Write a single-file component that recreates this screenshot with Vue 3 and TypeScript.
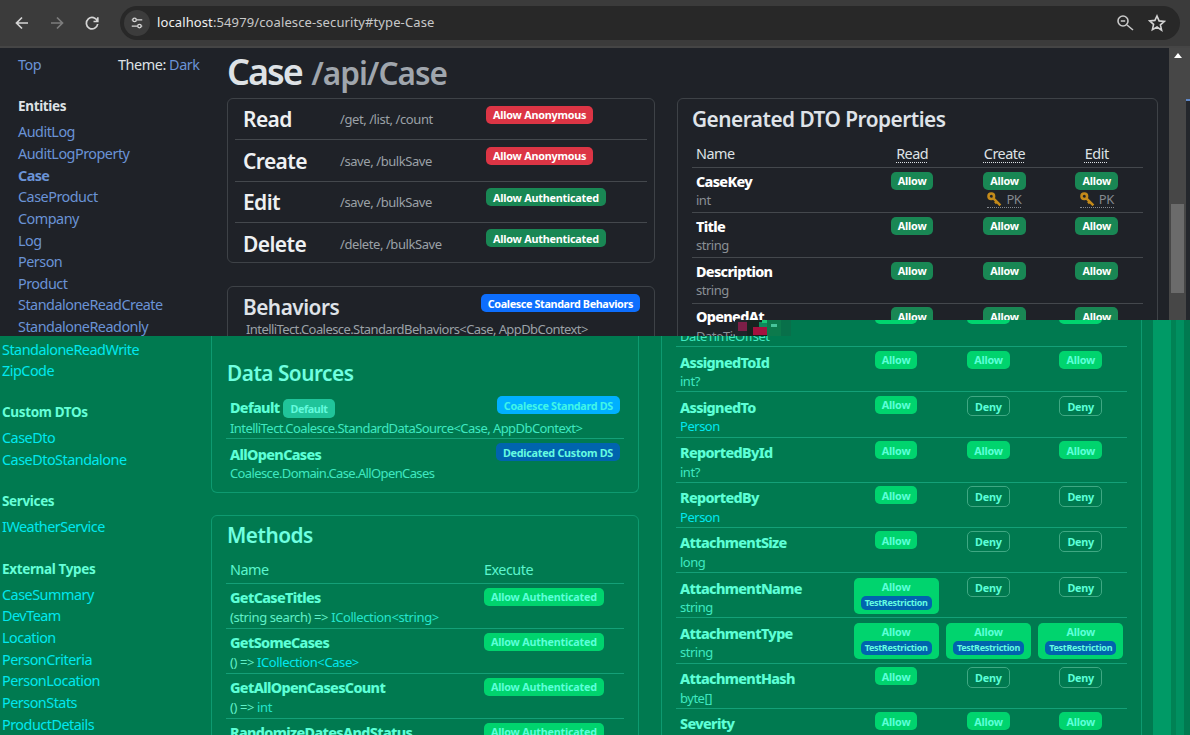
<script setup lang="ts">
type Access = 'allow' | 'deny' | 'restrict'
interface DtoRow { name: string; type: string; link?: boolean; access: Access[]; pk?: boolean }

const topEntities = ['AuditLog', 'AuditLogProperty', 'Case', 'CaseProduct', 'Company', 'Log', 'Person', 'Product', 'StandaloneReadCreate', 'StandaloneReadonly']
const groups = [
  { title: 'Custom DTOs', links: ['CaseDto', 'CaseDtoStandalone'] },
  { title: 'Services', links: ['IWeatherService'] },
  { title: 'External Types', links: ['CaseSummary', 'DevTeam', 'Location', 'PersonCriteria', 'PersonLocation', 'PersonStats', 'ProductDetails'] },
]
const perms = [
  { name: 'Read', route: '/get, /list, /count', label: 'Allow Anonymous', kind: 'danger' },
  { name: 'Create', route: '/save, /bulkSave', label: 'Allow Anonymous', kind: 'danger' },
  { name: 'Edit', route: '/save, /bulkSave', label: 'Allow Authenticated', kind: 'allow' },
  { name: 'Delete', route: '/delete, /bulkSave', label: 'Allow Authenticated', kind: 'allow' },
]
const allAllow: Access[] = ['allow', 'allow', 'allow']
const readOnly: Access[] = ['allow', 'deny', 'deny']
const darkRows: DtoRow[] = [
  { name: 'CaseKey', type: 'int', access: allAllow, pk: true },
  { name: 'Title', type: 'string', access: allAllow },
  { name: 'Description', type: 'string', access: allAllow },
  { name: 'OpenedAt', type: 'DateTimeOffset', access: allAllow },
]
const greenRows: DtoRow[] = [
  { name: '\u00a0', type: 'DateTimeOffset', access: allAllow },
  { name: 'AssignedToId', type: 'int?', access: allAllow },
  { name: 'AssignedTo', type: 'Person', link: true, access: readOnly },
  { name: 'ReportedById', type: 'int?', access: allAllow },
  { name: 'ReportedBy', type: 'Person', link: true, access: readOnly },
  { name: 'AttachmentSize', type: 'long', access: readOnly },
  { name: 'AttachmentName', type: 'string', access: ['restrict', 'deny', 'deny'] },
  { name: 'AttachmentType', type: 'string', access: ['restrict', 'restrict', 'restrict'] },
  { name: 'AttachmentHash', type: 'byte[]', access: readOnly },
  { name: 'Severity', type: 'string', access: allAllow },
]
const methods = [
  { name: 'GetCaseTitles', pre: '(string search) => ', ret: 'ICollection<string>', link: false },
  { name: 'GetSomeCases', pre: '() => ', ret: 'ICollection<Case>', link: true },
  { name: 'GetAllOpenCasesCount', pre: '() => ', ret: 'int', link: false },
  { name: 'RandomizeDatesAndStatus', pre: '() => ', ret: 'void', link: false },
]
const heads = ['Read', 'Create', 'Edit']
</script>

<template>
  <div class="page">
    <header class="chrome">
      <div class="navs">
        <svg class="nav" viewBox="0 0 16 16"><path d="M14 8H3M8 2.500 2.500 8 8 13.500" /></svg>
        <svg class="nav off" viewBox="0 0 16 16"><path d="M2 8h11M8 2.500 13.500 8 8 13.500" /></svg>
        <svg class="nav" viewBox="0 0 16 16"><path d="M13.400 6.200A5.700 5.700 0 1 0 13.700 9M13.800 2.200v4.300H9.500" /></svg>
      </div>
      <div class="omni">
        <span class="tune">
          <svg viewBox="0 0 16 16"><path d="M2 4.500h1M7.500 4.500H14M2 11.500h6.500M13 11.500h1" /><circle cx="5.200" cy="4.500" r="2" /><circle cx="10.800" cy="11.500" r="2" /></svg>
        </span>
        <span class="url"><b>localhost</b>:54979/coalesce-security#type-Case</span>
        <svg class="omni-icon" viewBox="0 0 18 18"><circle cx="7" cy="7" r="5" /><path d="M4.800 7h4.400M11 11l6 5" /></svg>
        <svg class="omni-icon star" viewBox="0 0 18 18"><path d="m9 2 2.100 4.900 5.300.5-4 3.500 1.200 5.200L9 13l-4.600 2.600 1.200-5.200-4-3.500 5.300-.5z" /></svg>
      </div>
    </header>

    <section class="band dark">
      <nav class="side">
        <div class="side-top"><a class="link">Top</a><span class="theme">Theme: <a class="link">Dark</a></span></div>
        <h6 class="group">Entities</h6>
        <a v-for="e in topEntities" :key="e" class="link row-link" :class="{ cur: e === 'Case' }">{{ e }}</a>
      </nav>
      <main class="main">
        <h1 class="title">Case <small>/api/Case</small></h1>
        <div class="cols">
          <div class="col-left">
            <div class="card perms">
              <div v-for="p in perms" :key="p.name" class="perm">
                <span class="perm-name">{{ p.name }}</span>
                <span class="perm-route">{{ p.route }}</span>
                <span class="perm-cell"><span class="badge" :class="p.kind">{{ p.label }}</span></span>
              </div>
            </div>
            <div class="card behaviors">
              <div class="head-line">
                <h2 class="h">Behaviors</h2>
                <span class="badge primary">Coalesce Standard Behaviors</span>
              </div>
              <div class="sub behave-sub">IntelliTect.Coalesce.StandardBehaviors&lt;Case, AppDbContext&gt;</div>
            </div>
          </div>
          <div class="card col-right">
            <h2 class="h">Generated DTO Properties</h2>
            <div class="dto-head">
              <span>Name</span>
              <span v-for="h in heads" :key="h" class="dto-h"><u>{{ h }}</u></span>
            </div>
            <div v-for="r in darkRows" :key="r.name" class="dto">
              <div class="dto-name"><strong>{{ r.name }}</strong><span class="sub">{{ r.type }}</span></div>
              <div v-for="(a, i) in r.access" :key="i" class="cell">
                <span class="badge allow">Allow</span>
                <span v-if="r.pk && i > 0" class="pk">
                  <svg viewBox="0 0 14 14"><circle cx="4" cy="4" r="2.600" /><path d="m6 6 6.500 6.500M9 9l-1.500 1.500" /></svg>PK
                </span>
              </div>
            </div>
          </div>
        </div>
      </main>
      <div class="scroll">
        <div class="track">
          <span class="arrow"></span>
          <span class="thumb"></span>
        </div>
        <div class="edge"><span class="edge-top"></span><span class="edge-tick"></span></div>
      </div>
    </section>

    <section class="band green">
      <nav class="side">
        <a class="link row-link">StandaloneReadWrite</a>
        <a class="link row-link">ZipCode</a>
        <template v-for="g in groups" :key="g.title">
          <h6 class="group">{{ g.title }}</h6>
          <a v-for="l in g.links" :key="l" class="link row-link">{{ l }}</a>
        </template>
      </nav>
      <main class="main">
        <div class="cols">
          <div class="col-left">
            <div class="card sources">
              <h2 class="h">Data Sources</h2>
              <div class="source">
                <div>
                  <strong>Default</strong>
                  <span class="badge pill-default">Default</span>
                  <span class="badge info">Coalesce Standard DS</span>
                </div>
                <div class="sub">IntelliTect.Coalesce.StandardDataSource&lt;Case, AppDbContext&gt;</div>
              </div>
              <div class="source last">
                <div><strong>AllOpenCases</strong><span class="badge custom">Dedicated Custom DS</span></div>
                <div class="sub">Coalesce.Domain.Case.AllOpenCases</div>
              </div>
            </div>
            <div class="card methods">
              <h2 class="h">Methods</h2>
              <div class="method-head"><span>Name</span><span>Execute</span></div>
              <div v-for="m in methods" :key="m.name" class="method">
                <div class="dto-name">
                  <strong>{{ m.name }}</strong>
                  <span class="sub">{{ m.pre }}<span :class="{ 'type-link': m.link }" class="ret">{{ m.ret }}</span></span>
                </div>
                <div class="method-cell"><span class="badge allow">Allow Authenticated</span></div>
              </div>
            </div>
          </div>
          <div class="card col-right cont">
            <div v-for="(r, ri) in greenRows" :key="ri" class="dto">
              <div class="dto-name">
                <strong>{{ r.name }}</strong>
                <span class="sub" :class="{ 'type-link': r.link }">{{ r.type }}</span>
              </div>
              <div v-for="(a, i) in r.access" :key="i" class="cell">
                <span v-if="a === 'allow'" class="badge allow">Allow</span>
                <span v-else-if="a === 'deny'" class="badge deny">Deny</span>
                <span v-else class="badge allow box">Allow<span class="badge restriction">TestRestriction</span></span>
              </div>
            </div>
          </div>
        </div>
      </main>
      <div class="stripes"><i class="s1"></i><i class="s2"></i><i class="s3"></i><i class="s4"></i></div>
      <svg class="glitch" viewBox="0 0 56 16" shape-rendering="crispEdges">
        <rect width="56" height="16" fill="#0a5a3c" />
        <rect x="0" width="12" height="16" fill="#20252a" />
        <rect x="3" y="2" width="9" height="9" fill="#7c1f48" />
        <rect x="12" width="20" height="16" fill="#16231f" />
        <rect x="18" y="7" width="14" height="8" fill="#a4123f" />
        <rect x="24" y="2" width="8" height="5" fill="#0f8a5c" />
        <rect x="27" y="0" width="5" height="3" fill="#18c878" />
        <rect x="32" width="14" height="16" fill="#0c7a4c" />
        <rect x="36" y="4" width="6" height="3" fill="#46c49a" />
        <rect x="46" width="10" height="16" fill="#08704a" />
      </svg>
    </section>
  </div>
</template>

<style>
html, body { margin: 0; background: #1f2228; overflow: hidden; }
</style>

<style scoped>
.page {
  width: 1190px;
  height: 735px;
  overflow: hidden;
  display: flex;
  flex-direction: column;
  font-family: "Noto Sans", "Open Sans", sans-serif;
  font-size: 14.400px;
  line-height: 21.650px;
  letter-spacing: -0.5px;
}
a { text-decoration: none; }
h1, h2, h6 { margin: 0; }

/* browser bar */
.chrome {
  flex: none;
  height: 48px;
  box-sizing: border-box;
  background: #3b3b3b;
  border-bottom: 2px solid #454545;
  display: flex;
  align-items: flex-start;
  padding-top: 6px;
}
.navs { width: 120px; height: 34px; display: flex; align-items: center; padding-left: 14px; gap: 19px; box-sizing: border-box; }
.nav { width: 16px; height: 16px; fill: none; stroke: #d5d5d5; stroke-width: 1.700; }
.nav.off { stroke: #7d7d7d; }
.omni {
  width: 1060px;
  height: 34px;
  background: #282828;
  border-radius: 17px;
  display: flex;
  align-items: center;
  padding-left: 4px;
  box-sizing: border-box;
  color: #c8c8c8;
  font-size: 13px;
  letter-spacing: 0;
}
.tune { width: 26px; height: 26px; border-radius: 50%; background: #3c3c3c; display: flex; align-items: center; justify-content: center; }
.tune svg { width: 14px; height: 14px; fill: none; stroke: #d8d8d8; stroke-width: 1.500; }
.url { margin-left: 7px; flex: 1; letter-spacing: 0.11px; }
.url b { font-weight: 400; color: #f0f0f0; }
.omni-icon { width: 18px; height: 18px; fill: none; stroke: #c9c9c9; stroke-width: 1.600; margin-right: 14px; }
.omni-icon.star { stroke: #d4d4d4; }

/* two bands */
.band { flex: none; display: flex; }
.dark {
  height: 288px;
  overflow: hidden;
  background: #1f2228;
  color: #dee2e6;
  --line: #44484d;
  --border: #3e4247;
  --link: #6a93d6;
  --muted: #8a8f95;
  --head: #dfe3e8;
  --strong: #fff;
  --allow-bg: #198754;
  --allow-fg: #fff;
}
.green {
  height: 415px;
  margin-top: -16px;
  position: relative;
  overflow: hidden;
  background: #007a50;
  color: #5cf5cd;
  clip-path: polygon(735px 16px, 735px 0, 100% 0, 100% 100%, 0 100%, 0 16px);
  --line: #14a078;
  --border: #0e9a70;
  --link: #00e8ee;
  --muted: #3fe8c0;
  --head: #70ffe0;
  --strong: #5dffd6;
  --allow-bg: #00d46e;
  --allow-fg: #5cffd8;
}

/* sidebar */
.side { flex: none; display: flex; flex-direction: column; box-sizing: border-box; }
.dark .side { width: 227px; padding: 6px 0 0 18px; }
.green .side { width: 211px; padding: 18.500px 0 0 2px; }
.side-top { display: flex; }
.side-top .theme { margin-left: 77px; letter-spacing: -0.45px; }
.link { color: var(--link); }
.row-link { height: 21.650px; }
.cur { font-weight: 700; letter-spacing: -0.6px; }
.group { font-size: 13.500px; font-weight: 700; line-height: 21.650px; margin: 20.500px 0 3.500px; color: #dee2e6; letter-spacing: -0.35px; }
.green .group { color: #66ffd8; }

/* main */
.main { flex: none; width: 931px; }
.title { font-size: 36px; font-weight: 600; line-height: 43px; padding: 2px 0 4px; letter-spacing: -2px; }
.title small { font-size: 31.500px; font-weight: 600; color: #a0a6ad; margin-left: 2px; letter-spacing: -1px; }
.cols { display: flex; gap: 22px; align-items: flex-start; }
.col-left { width: 428px; flex: none; }
.col-right { width: 481px; flex: none; box-sizing: border-box; padding: 7px 14px 0; }
.card { border: 1px solid var(--border); border-radius: 6px; box-sizing: border-box; }
.h { font-size: 20.800px; font-weight: 600; line-height: 26px; color: var(--head); letter-spacing: -0.5px; }
.green .h { margin-left: 1px; }
.sub { color: var(--muted); display: block; font-size: 13px; letter-spacing: -0.48px; }
.dark .perm-route, .dark .behave-sub { color: #9ba1a7; }

/* permissions */
.perms { height: 165px; padding: 0 7px; }
.perm { height: 41.250px; box-sizing: border-box; display: grid; grid-template-columns: 97px 146px 1fr; padding-left: 8px; border-bottom: 1px solid var(--line); align-items: center; }
.perm:last-child { border-bottom: 0; }
.perm-name { font-size: 21px; font-weight: 600; color: #eef0f2; letter-spacing: -0.6px; padding-top: 2px; }
.perm-route { font-size: 13px; padding-top: 2px; letter-spacing: -0.42px; }
.perm-cell { align-self: start; padding-top: 6.500px; display: flex; }

.badge {
  display: inline-block;
  box-sizing: border-box;
  font-size: 10.800px;
  font-weight: 700;
  line-height: 11px;
  padding: 3.500px 7px;
  border-radius: 5px;
  text-align: center;
  white-space: nowrap;
  letter-spacing: -0.22px;
}
.danger { background: #dc3545; color: #fff; }
.allow { background: var(--allow-bg); color: var(--allow-fg); }
.primary { background: #0d6efd; color: #fff; letter-spacing: -0.37px; }
.behaviors { margin-top: 23px; height: 100px; padding: 7px 14px 0 15px; }
.head-line { display: flex; justify-content: space-between; align-items: flex-start; }
.behave-sub { padding-left: 3px; margin-top: -1px; letter-spacing: -0.58px; }

/* dto table */
.dto-head { display: grid; grid-template-columns: 174px repeat(3, 92.300px); height: 27px; margin-top: 9px; border-bottom: 1px solid var(--line); box-sizing: border-box; align-items: center; }
.dto-head span:first-child { padding-left: 4px; }
.dto-h { text-align: center; }
.dto-h u { text-decoration: underline dotted 1px; text-underline-offset: 3px; }
.dto { display: grid; grid-template-columns: 174px repeat(3, 92.300px); height: 45.200px; box-sizing: border-box; border-bottom: 1px solid var(--line); }
.dto-name { padding: 4.500px 0 0 4px; line-height: 18.500px; }
.cont .dto-name { padding-top: 6.500px; }
.dto-name strong { display: block; color: var(--strong); font-weight: 800; font-size: 14.400px; letter-spacing: -0.68px; }
.cell { display: flex; flex-direction: column; align-items: center; padding-top: 3.500px; }
.pk { display: flex; align-items: center; gap: 4px; color: #84898f; font-size: 13px; line-height: 15px; margin-top: 2px; border-bottom: 1px dotted #84898f; }
.pk svg { width: 15px; height: 15px; fill: none; stroke: #c48a1a; stroke-width: 2.400; }
.allow.box { width: 85px; height: auto; padding: 3px 0 4px; display: flex; flex-direction: column; align-items: center; line-height: 11px; gap: 4px; margin-top: 1px; }
.restriction { background: #0064ae; color: #66fbe0; font-size: 9px; padding: 2px 0; line-height: 10px; width: 71px; letter-spacing: -0.3px; }
.deny { border: 1px solid #3fa883; color: #5cffd8; background: transparent; width: 43px; padding: 4px 0 3.500px; }

.cont { border-top: 0; border-radius: 0; margin-top: -18px; padding-top: 0; height: 470px; }

/* sources */
.sources { height: 173px; margin-bottom: 22px; padding: 40px 14px 0; border-top: 0; border-radius: 0 0 6px 6px; }
.source { position: relative; margin-top: 11px; padding: 1px 4px 0; height: 42px; box-sizing: border-box; border-bottom: 1px solid var(--line); line-height: 20px; }
.source .sub { letter-spacing: -0.56px; }
.source.last { border-bottom: 0; margin-top: 1px; padding-top: 5.500px; line-height: 18.500px; }
.source.last .sub { letter-spacing: -0.62px; }
.source strong { color: var(--strong); font-weight: 800; letter-spacing: -0.68px; }
.pill-default { background: #20c49a; color: #63fadc; margin-left: 4px; padding: 4px 7px; letter-spacing: -0.4px; }
.info { background: #00b0ff; color: #40f5e8; position: absolute; right: 4px; top: -1px; letter-spacing: -0.32px; }
.custom { background: #0064ae; color: #66fbe0; position: absolute; right: 4px; top: 3px; letter-spacing: -0.27px; }

.methods { padding: 6px 14px 0; height: 260px; }
.method-head { display: grid; grid-template-columns: 254px 1fr; height: 27px; margin-top: 9px; border-bottom: 1px solid var(--line); padding-left: 4px; align-items: center; box-sizing: border-box; }
.method { display: grid; grid-template-columns: 258px 1fr; height: 45.100px; border-bottom: 1px solid var(--line); box-sizing: border-box; }
.method .dto-name { padding-top: 5px; }
.method-cell { padding-top: 3.500px; display: flex; align-items: flex-start; }
.method .sub { color: #60f0c8; letter-spacing: -0.4px; }
.ret { color: #25e5cc; }
.type-link, .sub.type-link, .ret.type-link { color: #00e8ee; }

/* scrollbar and stripes */
.scroll { position: absolute; left: 1169px; top: 48px; width: 21px; height: 272px; display: flex; }
.track { width: 17px; background: #474747; display: flex; flex-direction: column; align-items: center; }
.arrow { width: 0; height: 0; margin-top: 5px; border: 4px solid transparent; border-top: 0; border-bottom: 5px solid #fff; }
.thumb { width: 13px; height: 89px; margin-top: 146px; background: #6b6b6b; }
.edge { width: 4px; background: #24272c; display: flex; flex-direction: column; }
.edge-top { height: 51px; background: #474747; }
.edge-tick { height: 2px; background: #5f88c8; }
.stripes { position: absolute; left: 1153px; top: 0; bottom: 0; width: 37px; display: flex; }
.stripes i { display: block; height: 100%; }
.s1 { width: 18px; background: #009a66; }
.s2 { width: 5px; background: #008254; }
.s3 { width: 8px; background: #009060; }
.s4 { width: 6px; background: #007a50; }
.glitch { position: absolute; left: 735px; top: 0; width: 56px; height: 16px; }
</style>
